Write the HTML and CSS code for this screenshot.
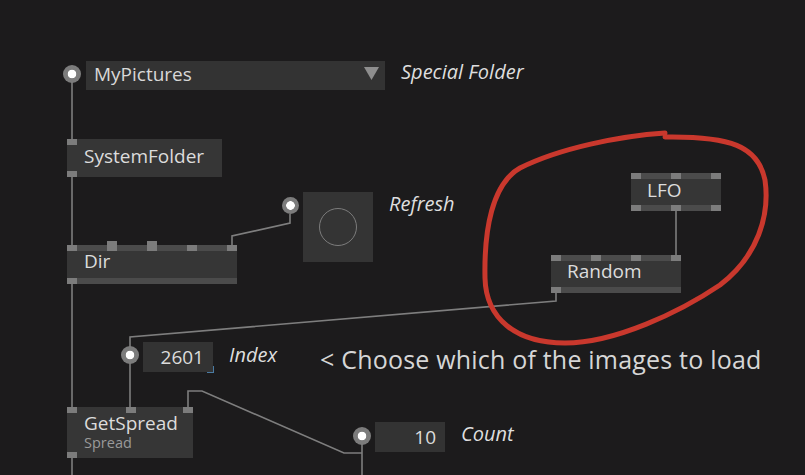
FILE: index.html
```html
<!DOCTYPE html>
<html>
<head>
<meta charset="utf-8">
<link rel="stylesheet" href="styles.css">
</head>
<body>
<div class="canvas">
  <svg class="links" width="805" height="475" viewBox="0 0 805 475">
    <polyline points="72,82 72,139"/>
    <polyline points="72,177 72,245"/>
    <polyline points="72,283 72,407"/>
    <polyline points="72,458 72,475"/>
    <polyline points="232,245 232,236 290,223 290,214"/>
    <polyline points="676,211 676,255"/>
    <polyline points="556,293 556,301 130,337 130,347"/>
    <polyline points="130,363 130,407"/>
    <polyline points="188,407 188,391 202,391 344,453 362,453"/>
    <polyline points="362,444 362,475"/>
  </svg>

  <!-- MyPictures enum IOBox -->
  <div class="iopin" style="left:63px;top:65px"></div>
  <div class="dropdown">
    <span class="dd-text">MyPictures</span>
    <svg class="dd-arrow" width="15" height="13" viewBox="0 0 15 13"><polygon points="0,0 15,0 7.5,13"/></svg>
  </div>
  <span class="label" style="left:401px;top:62px">Special Folder</span>

  <!-- SystemFolder -->
  <div class="node simple n-sysfolder">
    <span class="pin pin-tl"></span>
    <span class="node-title">SystemFolder</span>
    <span class="pin pin-bl"></span>
  </div>

  <!-- Dir -->
  <div class="node banded n-dir">
    <div class="band top">
      <span class="pin"></span><span class="pin tall"></span><span class="pin tall"></span><span class="pin"></span><span class="pin"></span>
    </div>
    <div class="body"><span class="node-title">Dir</span></div>
    <div class="band bottom"><span class="pin"></span></div>
  </div>

  <!-- Refresh toggle -->
  <div class="iopin small" style="left:282px;top:197px"></div>
  <div class="toggle"><span class="toggle-circle"></span></div>
  <span class="label" style="left:389px;top:194px">Refresh</span>

  <!-- LFO -->
  <div class="node banded n-lfo">
    <div class="band top"><span class="pin"></span><span class="pin"></span><span class="pin"></span></div>
    <div class="body"><span class="node-title">LFO</span></div>
    <div class="band bottom"><span class="pin"></span><span class="pin"></span><span class="pin"></span></div>
  </div>

  <!-- Random -->
  <div class="node banded n-random">
    <div class="band top"><span class="pin"></span><span class="pin"></span><span class="pin"></span><span class="pin"></span></div>
    <div class="body"><span class="node-title">Random</span></div>
    <div class="band bottom"><span class="pin"></span></div>
  </div>

  <!-- Index IOBox -->
  <div class="iopin" style="left:121px;top:346px"></div>
  <div class="numbox nb-index"><span>2601</span><span class="corner"></span></div>
  <span class="label" style="left:229px;top:345px">Index</span>

  <span class="comment">&lt; Choose which of the images to load</span>

  <!-- GetSpread -->
  <div class="node simple n-getspread">
    <span class="pin pin-t1"></span><span class="pin pin-t2"></span><span class="pin pin-t3"></span>
    <span class="node-title">GetSpread</span>
    <span class="node-sub">Spread</span>
    <span class="pin pin-bl"></span>
  </div>

  <!-- Count IOBox -->
  <div class="iopin" style="left:353px;top:427px"></div>
  <div class="numbox nb-count"><span>10</span></div>
  <span class="label" style="left:461px;top:424px">Count</span>

  <svg class="scribble" width="805" height="475" viewBox="0 0 805 475">
    <path d="M 665 133 C 620 136, 560 148, 520 168 C 492 184, 484 230, 485 278 C 486 318, 515 343, 565 343 C 615 343, 680 312, 720 285 C 758 256, 770 215, 765 180 C 758 146, 730 136, 665 137"/>
  </svg>
</div>
</body>
</html>
```

FILE: styles.css
```css
html, body {
  margin: 0;
  padding: 0;
  background: #1c1b1c;
}
.canvas {
  position: relative;
  width: 805px;
  height: 475px;
  overflow: hidden;
  font-family: "Open Sans", "Noto Sans", sans-serif;
  color: #d6d6d6;
}
.links {
  position: absolute;
  left: 0;
  top: 0;
}
.links polyline {
  fill: none;
  stroke: #7e7e7e;
  stroke-width: 1.6;
}
.scribble {
  position: absolute;
  left: 0;
  top: 0;
  pointer-events: none;
}
.scribble path {
  fill: none;
  stroke: #c9382d;
  stroke-width: 5;
  stroke-linecap: round;
  stroke-linejoin: round;
}
.iopin {
  position: absolute;
  width: 18px;
  height: 18px;
  border-radius: 50%;
  background: radial-gradient(circle, #ffffff 0 4px, #7c7c7c 4.6px);
}
.iopin.small {
  width: 17px;
  height: 17px;
}
.dropdown {
  position: absolute;
  left: 86px;
  top: 61px;
  width: 299px;
  height: 29px;
  background: #333333;
  display: flex;
  align-items: flex-start;
  justify-content: space-between;
  padding: 3px 6px 0 8px;
  box-sizing: border-box;
}
.dd-text {
  font-size: 19px;
  line-height: 20px;
  color: #d8d8d8;
}
.dd-arrow {
  margin-top: 3px;
}
.dd-arrow polygon {
  fill: #8e8e8e;
}
.label {
  position: absolute;
  font-size: 20px;
  line-height: 20px;
  font-style: italic;
  color: #dedede;
  white-space: nowrap;
}
.comment {
  position: absolute;
  left: 320px;
  top: 346px;
  font-size: 25px;
  line-height: 26px;
  letter-spacing: 0.2px;
  color: #d6d6d6;
  white-space: nowrap;
}
.node {
  position: absolute;
}
.node-title {
  font-size: 19px;
  line-height: 20px;
  color: #dcdcdc;
  white-space: nowrap;
}
.pin {
  display: block;
  width: 10px;
  height: 6px;
  background: #7c7c7c;
}
.node.simple {
  background: #363636;
  box-sizing: border-box;
  padding-left: 17px;
  display: flex;
  flex-direction: column;
}
.node.simple .pin {
  position: absolute;
}
.node.simple .pin-tl, .node.simple .pin-t1 { left: 0; top: 0; }
.node.simple .pin-bl { left: 0; bottom: 0; }
.n-sysfolder {
  left: 67px;
  top: 139px;
  width: 155px;
  height: 38px;
  padding-top: 7px;
}
.n-getspread {
  left: 67px;
  top: 407px;
  width: 126px;
  height: 51px;
  padding-top: 7px;
}
.n-getspread .node-title { line-height: 19px; }
.n-getspread .pin-t2 { left: 59px; top: 0; }
.n-getspread .pin-t3 { right: 0; top: 0; }
.node-sub {
  font-size: 14.5px;
  color: #9a9a9a;
  line-height: 20px;
}
.node.banded {
  display: flex;
  flex-direction: column;
}
.band {
  height: 6px;
  background: #4b4b4b;
  display: flex;
  justify-content: space-between;
  align-items: flex-end;
}
.band .pin.tall {
  height: 10px;
}
.body {
  background: #363636;
  height: 26px;
  padding-left: 17px;
  display: flex;
  align-items: flex-start;
}
.n-dir {
  left: 67px;
  top: 245px;
  width: 170px;
}
.n-dir .body { height: 27px; }
.n-lfo {
  left: 631px;
  top: 173px;
  width: 90px;
}
.n-lfo .body { padding-left: 16px; padding-top: 1px; height: 25px; }
.n-random {
  left: 551px;
  top: 255px;
  width: 130px;
}
.n-random .body { padding-left: 16px; }
.toggle {
  position: absolute;
  left: 303px;
  top: 192px;
  width: 70px;
  height: 70px;
  background: #343434;
  display: flex;
  align-items: center;
  justify-content: center;
}
.toggle-circle {
  width: 36px;
  height: 36px;
  border-radius: 50%;
  border: 1.6px solid #7c7c7c;
}
.numbox {
  position: absolute;
  width: 70px;
  height: 30px;
  background: #333333;
  box-sizing: border-box;
  padding: 5px 9px 0 0;
  display: flex;
  align-items: flex-start;
  justify-content: flex-end;
  font-size: 19px;
  line-height: 20px;
  color: #dcdcdc;
}
.nb-index {
  left: 143px;
  top: 342px;
}
.nb-count {
  left: 375px;
  top: 422px;
}
.corner {
  position: absolute;
  right: -1px;
  bottom: -1px;
  width: 7px;
  height: 7px;
  border-right: 1.5px solid #4a7ba3;
  border-bottom: 1.5px solid #4a7ba3;
  box-sizing: border-box;
}
```
